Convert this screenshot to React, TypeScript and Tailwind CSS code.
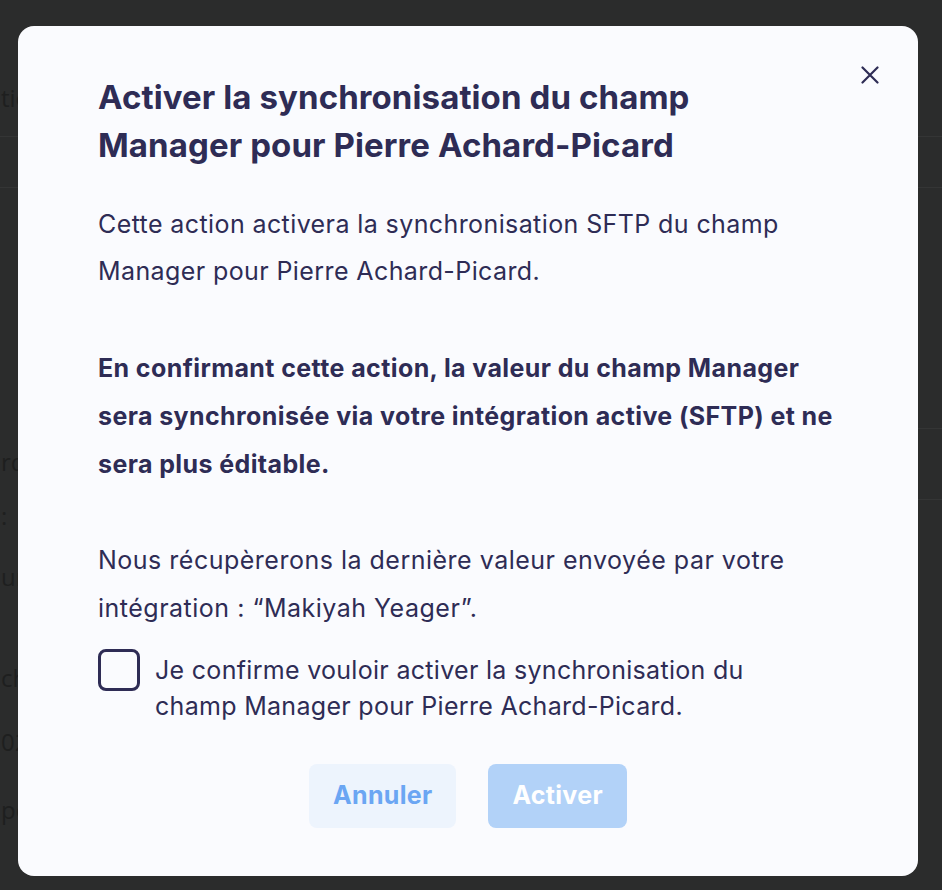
const leftRows = [
  { h: "h-[60px]", text: "" },
  { h: "h-[77px] border-b border-[#343535]", text: "tions" },
  { h: "h-[51px] border-b border-[#343535]", text: "" },
  { h: "h-[250px]", text: "" },
  { h: "h-[48px]", text: "rd" },
  { h: "h-[60px]", text: ":" },
  { h: "h-[62px]", text: "ur" },
  { h: "h-[38px]", text: "" },
  { h: "h-[64px]", text: "ch" },
  { h: "h-[64px]", text: "02" },
  { h: "h-[72px]", text: "pe" },
];

const rightRows = [
  { h: "h-[60px]", text: "" },
  { h: "h-[77px] border-b border-[#343535]", text: "Actions" },
  { h: "h-[51px] border-b border-[#343535]", text: "" },
  { h: "h-[130px]", text: "Libellés" },
  { h: "h-[58px]", text: "Carole" },
  { h: "h-[52px]", text: "" },
  { h: "h-[72px] border-t border-[#343535] border-b", text: "Manager" },
];

function CloseIcon() {
  return (
    <svg viewBox="0 0 18 18" className="w-[18px] h-[18px]" fill="none">
      <path
        d="M1.5 1.5L16.5 16.5M16.5 1.5L1.5 16.5"
        stroke="#2e2c55"
        strokeWidth="2.2"
        strokeLinecap="round"
      />
    </svg>
  );
}

export default function App() {
  return (
    <div className="relative w-full h-[890px] overflow-hidden bg-[#2b2c2c] font-['Inter',sans-serif]">
      {/* dimmed page behind the dialog */}
      <div className="flex justify-between h-full text-[24px] text-[#1e1f1f] font-['Open_Sans',sans-serif]">
        <div className="flex flex-col w-[120px]">
          {leftRows.map((r, i) => (
            <div key={i} className={`${r.h} flex items-center pl-[1px]`}>
              {r.text}
            </div>
          ))}
        </div>
        <div className="flex flex-col w-[140px]">
          {rightRows.map((r, i) => (
            <div key={i} className={`${r.h} flex items-center`}>
              {r.text}
            </div>
          ))}
        </div>
      </div>

      {/* dialog */}
      <div className="absolute inset-0 flex justify-start pl-[18px] pt-[26px]">
        <div className="relative w-[900px] self-start rounded-[16px] bg-[#fafbfe] px-[80px] pt-[47px] pb-[48px] text-[#2e2c55] whitespace-nowrap">
          <button className="absolute right-[39px] top-[40px] w-[18px] h-[18px] flex items-center justify-center">
            <CloseIcon />
          </button>

          <h2 className="text-[33px] leading-[48px] font-bold tracking-[0.1px]">
            Activer la synchronisation du champ
            <br />
            Manager pour Pierre Achard-Picard
          </h2>

          <p className="mt-[32px] text-[25px] leading-[47px] tracking-[0.4px]">
            Cette action activera la synchronisation SFTP du champ
            <br />
            Manager pour Pierre Achard-Picard.
          </p>

          <p className="mt-[49px] text-[25px] leading-[48px] font-bold tracking-[0.4px]">
            En confirmant cette action, la valeur du champ Manager
            <br />
            sera synchronisée via votre intégration active (SFTP) et ne
            <br />
            sera plus éditable.
          </p>

          <p className="mt-[48px] text-[25px] leading-[48px] tracking-[0.5px]">
            Nous récupèrerons la dernière valeur envoyée par votre
            <br />
            intégration : “Makiyah Yeager”.
          </p>

          <label className="mt-[17px] flex items-start gap-[15px]">
            <span className="w-[42px] h-[42px] shrink-0 rounded-[8px] border-[3px] border-[#2e2c55]" />
            <span className="mt-[3px] text-[25px] leading-[36px] tracking-[0.3px]">
              Je confirme vouloir activer la synchronisation du
              <br />
              champ Manager pour Pierre Achard-Picard.
            </span>
          </label>

          <div className="mt-[40px] flex justify-center gap-[32px]">
            <button className="h-[64px] px-[24px] rounded-[8px] bg-[#edf4fd] text-[#6ba6f3] text-[25px] font-bold tracking-[0.3px]">
              Annuler
            </button>
            <button className="h-[64px] px-[24px] rounded-[8px] bg-[#b2d2f8] text-white text-[25px] font-bold tracking-[0.3px]">
              Activer
            </button>
          </div>
        </div>
      </div>
    </div>
  );
}
